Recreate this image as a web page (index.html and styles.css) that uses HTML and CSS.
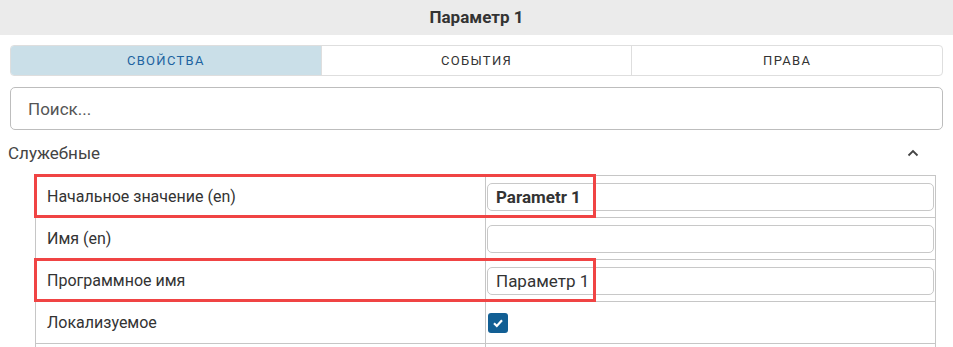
FILE: index.html
```html
<!DOCTYPE html>
<html lang="ru">
<head>
  <meta charset="UTF-8" />
  <meta name="viewport" content="width=device-width, initial-scale=1.0"/>
  <title>Параметр 1</title>
  <link rel="stylesheet" href="styles.css">
</head>
<body>
  <div class="title-bar">Параметр 1</div>

  <div class="panel">
    <div class="tabs">
      <div class="tab active">Свойства</div>
      <div class="tab">События</div>
      <div class="tab">Права</div>
    </div>

    <input class="search" type="text" placeholder="Поиск...">

    <div class="section-head">
      <span>Служебные</span>
      <svg class="chevron" viewBox="0 0 12 8" width="12" height="8">
        <path d="M1.5 6.5 L6 2 L10.5 6.5" fill="none" stroke="#444" stroke-width="1.8"/>
      </svg>
    </div>

    <div class="props">
      <div class="row">
        <div class="label">Начальное значение (en)</div>
        <div class="value"><input class="field bold" type="text" value="Parametr 1"></div>
        <div class="mark"></div>
      </div>
      <div class="row">
        <div class="label">Имя (en)</div>
        <div class="value"><input class="field" type="text" value=""></div>
      </div>
      <div class="row">
        <div class="label">Программное имя</div>
        <div class="value"><input class="field" type="text" value="Параметр 1"></div>
        <div class="mark"></div>
      </div>
      <div class="row">
        <div class="label">Локализуемое</div>
        <div class="value">
          <span class="check">
            <svg viewBox="0 0 12 12" width="12" height="12">
              <path d="M2 6.3 L4.8 9 L10 3.2" fill="none" stroke="#fff" stroke-width="2.2"/>
            </svg>
          </span>
        </div>
      </div>
      <div class="row">
        <div class="label"></div>
        <div class="value"></div>
      </div>
    </div>
  </div>
</body>
</html>
```

FILE: styles.css
```css
body {
  margin: 0;
  font-family: Roboto, 'Liberation Sans', sans-serif;
  color: #333;
  background: #fff;
  overflow: hidden;
  height: 347px;
}

.title-bar {
  height: 35px;
  line-height: 35px;
  background: #ebebeb;
  text-align: center;
  font-weight: bold;
  font-size: 17px;
  color: #333;
}

.panel {
  padding: 10px 10px 0 10px;
}

.tabs {
  display: flex;
  height: 31px;
  border: 1px solid #dedede;
  border-radius: 4px;
  overflow: hidden;
  box-sizing: border-box;
}

.tab {
  flex: 1;
  display: flex;
  align-items: center;
  justify-content: center;
  font-size: 13px;
  letter-spacing: 1.3px;
  text-transform: uppercase;
  color: #333;
  border-left: 1px solid #dedede;
}

.tab:first-child {
  border-left: none;
}

.tab.active {
  background: #cadfe8;
  color: #1d63a0;
}

.search {
  display: block;
  width: 100%;
  box-sizing: border-box;
  height: 43px;
  margin-top: 11px;
  padding: 0 17px;
  border: 1px solid #bdbdbd;
  border-radius: 5px;
  font-family: inherit;
  font-size: 17px;
  color: #333;
  outline: none;
}

.search::placeholder {
  color: #555;
}

.section-head {
  display: flex;
  align-items: center;
  justify-content: space-between;
  height: 45px;
  margin-left: -2px;
  padding-right: 24px;
  font-size: 17px;
  color: #444;
}

.props {
  margin: 0 7px 0 25px;
  border: 1px solid #c6c6c6;
  border-bottom: none;
}

.row {
  position: relative;
  display: grid;
  grid-template-columns: 450px 1fr;
  height: 42px;
  border-bottom: 1px solid #c6c6c6;
  box-sizing: border-box;
}

.label {
  display: flex;
  align-items: center;
  padding: 0 11px;
  font-size: 16px;
  color: #333;
  border-right: 1px solid #c6c6c6;
}

.value {
  display: flex;
  align-items: center;
  padding: 0 1px;
}

.field {
  width: 100%;
  height: 28px;
  box-sizing: border-box;
  border: 1px solid #c8c8c8;
  border-radius: 5px;
  padding: 0 8px;
  font-family: inherit;
  font-size: 17px;
  color: #333;
  outline: none;
}

.field.bold {
  font-weight: bold;
}

.check {
  display: flex;
  align-items: center;
  justify-content: center;
  width: 20px;
  height: 20px;
  margin-left: 1px;
  border-radius: 3px;
  background: #125f94;
}

.mark {
  position: absolute;
  left: -2px;
  top: -2px;
  width: 562px;
  height: 44px;
  box-sizing: border-box;
  border: 3px solid #f04444;
  pointer-events: none;
}
```
